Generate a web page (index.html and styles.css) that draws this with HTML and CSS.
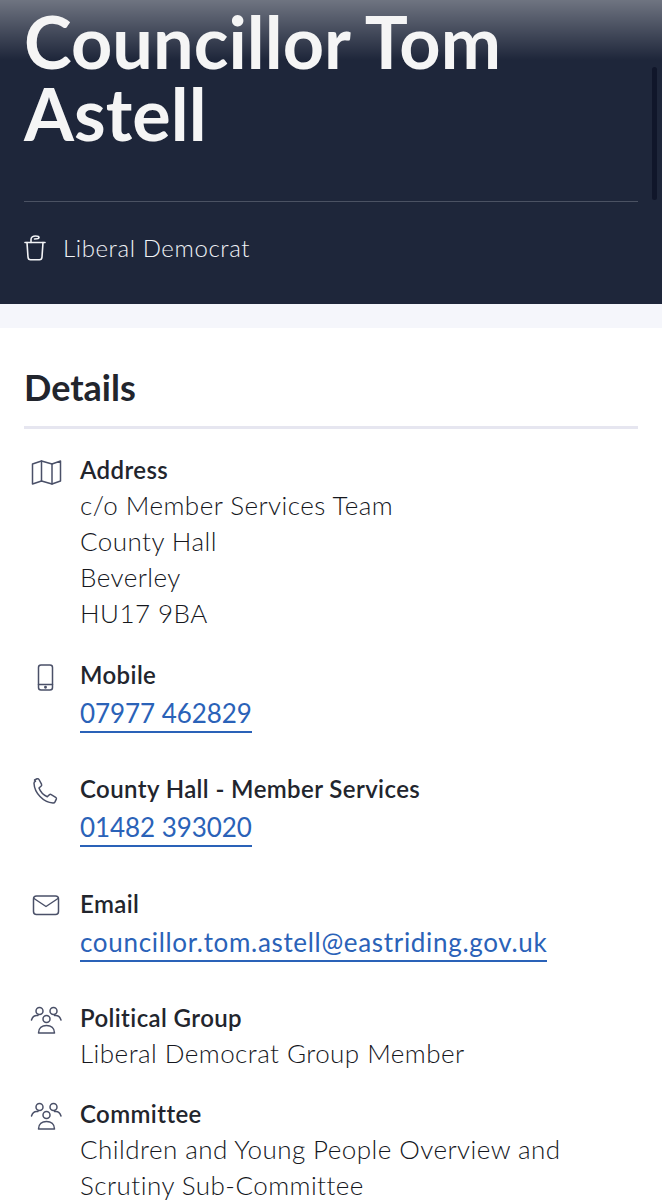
FILE: index.html
```html
<!DOCTYPE html>
<html lang="en">
<head>
    <meta charset="UTF-8">
    <meta name="viewport" content="width=device-width, initial-scale=1.0">
    <title>Councillor Tom Astell</title>
    <link rel="stylesheet" href="styles.css">
</head>
<body>
    <header class="hero">
        <div class="hero-fade"></div>
        <div class="scroll-thumb"></div>
        <h1>Councillor Tom Astell</h1>
        <div class="party">
            <svg class="party-icon" viewBox="0 0 22 26" fill="none" stroke="#f2f3f6" stroke-width="1.600" stroke-linecap="round" stroke-linejoin="round">
                <path d="M1 7.500h20"/>
                <path d="M3 7.500l1 14.500c.1 1.500 1 2.800 2.500 2.800h9c1.500 0 2.400-1.300 2.500-2.800l1-14.500"/>
                <path d="M7 7.500V4.500C7 2.200 9 1 11.500 1c2 0 3.500.5 3.500 1.600 0 1.200-2.500 1.400-4.500 1.400"/>
            </svg>
            <span>Liberal Democrat</span>
        </div>
    </header>

    <div class="strip"></div>

    <main class="details">
        <h2>Details</h2>

        <div class="row row-address">
            <svg class="icon" viewBox="0 0 37 32"><path d="M8.500 10v20l9-3 10.500 3 8.500-3V7l-8.500 3-10.500-3z"/><path d="M17.500 7v20"/><path d="M28 10v20"/></svg>
            <div class="row-body">
                <div class="label">Address</div>
                <div>c/o Member Services Team</div>
                <div>County Hall</div>
                <div>Beverley</div>
                <div>HU17 9BA</div>
            </div>
        </div>

        <div class="row">
            <svg class="icon" viewBox="0 0 37 32"><rect x="14.500" y="6" width="14" height="25" rx="2.500"/><path d="M14.500 25.500h14"/><circle class="dot" cx="21.500" cy="28.200" r="0.700"/></svg>
            <div class="row-body">
                <div class="label">Mobile</div>
                <div class="link-line"><a class="tel" href="#">07977 462829</a></div>
            </div>
        </div>

        <div class="row">
            <svg class="icon" viewBox="0 0 37 32"><path d="M10.500 7l2.600-1.200c.8-.3 1.500 0 1.900.7l2.500 4.700c.3.700.2 1.300-.3 1.800l-2.200 2c1.400 3.800 4.400 7 8.300 8.800l2-2c.6-.5 1.200-.6 1.900-.2l4.500 2.700c.7.400.9 1.100.6 1.800l-1.300 2.800c-.4.800-1.100 1.200-2 1.100-9.800-.8-18.500-10-19-19.800 0-.9.500-1.600 1.500-2z"/></svg>
            <div class="row-body">
                <div class="label">County Hall - Member Services</div>
                <div class="link-line"><a class="tel" href="#">01482 393020</a></div>
            </div>
        </div>

        <div class="row">
            <svg class="icon" viewBox="0 0 37 32"><rect x="9.500" y="8" width="25" height="18.500" rx="3"/><path d="M10 10.500l12 8 12-8"/></svg>
            <div class="row-body">
                <div class="label">Email</div>
                <div class="link-line"><a href="#">councillor.tom.astell@eastriding.gov.uk</a></div>
            </div>
        </div>

        <div class="row">
            <svg class="icon" viewBox="0 0 37 32">
                <defs>
                    <g id="people">
                        <circle cx="15.500" cy="9" r="3.500"/><circle cx="29.500" cy="9" r="3.500"/><circle cx="22.500" cy="17" r="3.500"/>
                        <path d="M7.500 18c1-3 3-4.500 5-4.500h1.500"/><path d="M37 18c-1-3-3-4.500-5-4.500h-1.500"/>
                        <path d="M14.500 31c0-5 3.500-7.500 8-7.500s8 2.500 8 7.500z"/>
                    </g>
                </defs>
                <use href="#people"/>
            </svg>
            <div class="row-body">
                <div class="label">Political Group</div>
                <div>Liberal Democrat Group Member</div>
            </div>
        </div>

        <div class="row">
            <svg class="icon" viewBox="0 0 37 32"><use href="#people"/></svg>
            <div class="row-body">
                <div class="label">Committee</div>
                <div>Children and Young People Overview and Scrutiny Sub-Committee</div>
            </div>
        </div>
    </main>
</body>
</html>
```

FILE: styles.css
```css
html, body {
    margin: 0;
    padding: 0;
}
body {
    font-family: Lato, "Open Sans", sans-serif;
    background: white;
    color: #15171d;
    height: 1200px;
    overflow: hidden;
}
.hero {
    position: relative;
    box-sizing: border-box;
    height: 304px;
    padding: 5px 24px 0;
    background: #1e263a;
    color: #f5f5f5;
}
.hero-fade {
    position: absolute;
    top: 0;
    left: 0;
    right: 0;
    height: 60px;
    background: linear-gradient(to bottom, rgba(255,255,255,0.36), rgba(255,255,255,0));
}
.scroll-thumb {
    position: absolute;
    top: 67px;
    left: 652px;
    width: 5px;
    height: 133px;
    border-radius: 3px;
    background: #10162a;
}
h1 {
    position: relative;
    margin: 0;
    height: 196px;
    border-bottom: 1px solid #4b5263;
    font-size: 72px;
    line-height: 72px;
    font-weight: 700;
    letter-spacing: 0.05px;
}
.party {
    display: flex;
    align-items: center;
    gap: 17px;
    margin-top: 28px;
    font-size: 24px;
    line-height: 36px;
    font-weight: 300;
    letter-spacing: 0.6px;
    color: #f0f2f6;
}
.party-icon {
    width: 22px;
    height: 26px;
}
.strip {
    height: 24px;
    background: #f5f6fb;
}
.details {
    padding: 39px 24px 0;
    font-size: 26px;
    line-height: 36px;
    font-weight: 300;
    letter-spacing: 0.45px;
}
h2 {
    margin: 0 0 23px;
    padding-bottom: 18px;
    border-bottom: 3px solid #e6e6f0;
    font-size: 36px;
    line-height: 41px;
    font-weight: 700;
    letter-spacing: 0;
    color: #22252d;
}
.row {
    display: flex;
    gap: 19px;
    margin-bottom: 25px;
}
.row-address {
    margin-bottom: 26px;
}
.row-body {
    flex: 1;
    min-width: 0;
}
.label {
    height: 35px;
    font-weight: 600;
    font-size: 24px;
    letter-spacing: 0.4px;
    color: #22252d;
}
.icon {
    flex: none;
    width: 37px;
    height: 32px;
    fill: none;
    stroke: #4a5068;
    stroke-width: 1.500;
    stroke-linejoin: round;
    stroke-linecap: round;
    margin-top: 2px;
    overflow: visible;
}
.icon .dot {
    fill: #4a5068;
}
.link-line {
    height: 54.250px;
    padding-top: 3px;
    box-sizing: border-box;
}
.link-line a {
    display: inline-block;
    color: #2a62b8;
    font-weight: 400;
    font-size: 26px;
    line-height: 36px;
    letter-spacing: 0.680px;
    text-decoration: none;
    border-bottom: 2px solid #2a62b8;
}
.link-line a.tel {
    letter-spacing: -0.070px;
}
```
